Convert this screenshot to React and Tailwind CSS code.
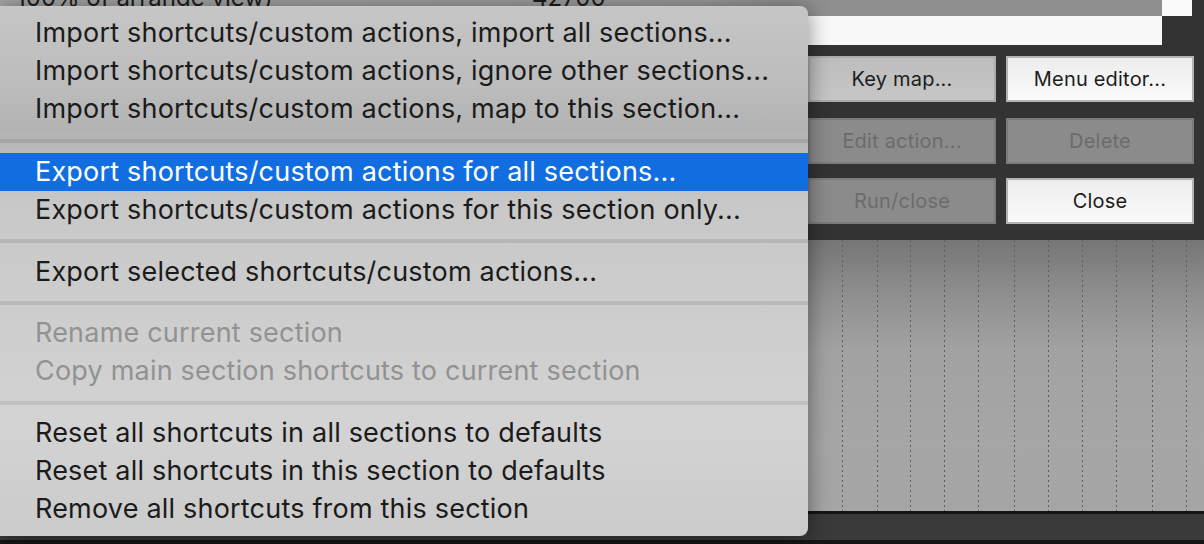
import React from "react";

const groups = [
  [
    { t: "Import shortcuts/custom actions, import all sections..." },
    { t: "Import shortcuts/custom actions, ignore other sections..." },
    { t: "Import shortcuts/custom actions, map to this section..." },
  ],
  [
    { t: "Export shortcuts/custom actions for all sections...", hl: true },
    { t: "Export shortcuts/custom actions for this section only..." },
  ],
  [{ t: "Export selected shortcuts/custom actions..." }],
  [
    { t: "Rename current section", dis: true },
    { t: "Copy main section shortcuts to current section", dis: true },
  ],
  [
    { t: "Reset all shortcuts in all sections to defaults" },
    { t: "Reset all shortcuts in this section to defaults" },
    { t: "Remove all shortcuts from this section" },
  ],
];

const sepClasses = [
  "pt-[11px] pb-[10px]",
  "pt-[10px] pb-[10px]",
  "pt-[10px] pb-[9px]",
  "pt-[11px] pb-[9px]",
];

const lineMargins = [
  "ml-[842px]",
  "ml-[34px]",
  "ml-[32px]",
  "ml-[33px]",
  "ml-[33px]",
  "ml-[35px]",
  "ml-[33px]",
  "ml-[33px]",
  "ml-[33px]",
  "ml-[35px]",
  "ml-[33px]",
];

function Btn({ children, kind }) {
  const cls =
    kind === "white"
      ? "bg-[linear-gradient(to_bottom,#ededed,#fafafa)] border-[#b4b4b4] text-[#1c1c1c]"
      : kind === "gray"
      ? "bg-[linear-gradient(to_bottom,#bdbdbd,#c6c6c6)] border-[#acacac] text-[#1c1c1c]"
      : "bg-[#8b8b8b] border-[#7b7b7b] text-[#6b6b6b]";
  return (
    <div
      className={`w-[188px] h-[46px] border-2 flex items-center justify-center text-[20px] tracking-[0.2px] ${cls}`}
    >
      {children}
    </div>
  );
}

export default function App() {
  return (
    <div className="relative w-[1204px] h-[544px] overflow-hidden bg-[#333333] flex flex-col font-['Inter',sans-serif]">
      {/* top list row */}
      <div className="h-[16px] flex">
        <div className="flex-1 overflow-hidden bg-[linear-gradient(to_right,#a6a6a6,#9c9c9c_60%,#8f8f8f_70%)] text-[#1c1c1c] text-[24px] leading-[16px]">
          <div className="flex -mt-[10px]">
            <span className="ml-[16px] w-[516px]">100% of arrange view)</span>
            <span>42700</span>
          </div>
        </div>
        <div className="w-[30px] bg-[#fafafa]" />
        <div className="w-[12px]" />
      </div>
      {/* text field */}
      <div className="h-[29px] flex">
        <div className="w-[1162px] bg-[#f8f8f8]" />
      </div>
      {/* buttons */}
      <div className="h-[195px] pt-[11px] pr-[10px] flex flex-col items-end">
        <div className="flex gap-[10px]">
          <Btn kind="gray">Key map...</Btn>
          <Btn kind="white">Menu editor...</Btn>
        </div>
        <div className="flex gap-[10px] mt-[16px]">
          <Btn>Edit action...</Btn>
          <Btn>Delete</Btn>
        </div>
        <div className="flex gap-[10px] mt-[14px]">
          <Btn>Run/close</Btn>
          <Btn kind="white">Close</Btn>
        </div>
      </div>
      {/* grid area */}
      <div className="h-[271px] flex bg-[linear-gradient(to_bottom,#767676_0px,#8f8f8f_55px,#a2a2a2_110px,#a6a6a6_200px,#a5a5a5_271px)]">
        {lineMargins.map((m, i) => (
          <div
            key={i}
            className={`w-px h-full ${m} bg-[repeating-linear-gradient(to_bottom,#5e5e5e_0px,#5e5e5e_2px,transparent_2px,transparent_5px)]`}
          />
        ))}
      </div>
      <div className="h-[3px] bg-[#141414]" />
      <div className="h-[26px] bg-[#3a3a3a]" />
      <div className="h-[4px] bg-[#151515]" />

      {/* popup menu */}
      <div className="absolute left-0 top-[6px] w-[808px] h-[530px] rounded-r-[8px] overflow-hidden shadow-[0_2px_22px_rgba(0,0,0,0.45)] bg-[linear-gradient(to_bottom,#c6c6c6_0px,#bcbcbc_80px,#b3b3b3_125px,#bcbcbc_150px,#c8c8c8_200px,#cdcdcd_300px,#d3d3d3_420px,#cbcbcb_530px)] pt-[8px] flex flex-col text-[27px] tracking-[0.2px]">
        {groups.map((g, gi) => (
          <React.Fragment key={gi}>
            {gi > 0 && (
              <div className={sepClasses[gi - 1]}>
                <div className="h-[4px] bg-black/[0.09]" />
              </div>
            )}
            {g.map((it, ii) => (
              <div
                key={ii}
                className={`h-[38px] flex items-center pl-[35px] whitespace-nowrap ${
                  it.hl
                    ? "bg-[#126ee0] text-white"
                    : it.dis
                    ? "text-[#929292]"
                    : "text-[#1b1b1b]"
                }`}
              >
                {it.t}
              </div>
            ))}
          </React.Fragment>
        ))}
      </div>
    </div>
  );
}
